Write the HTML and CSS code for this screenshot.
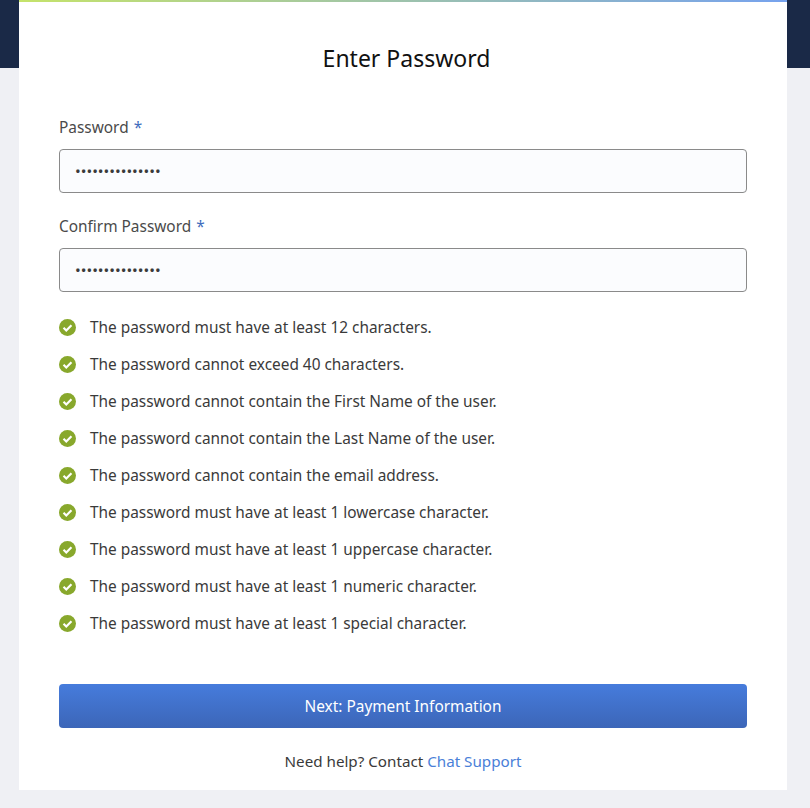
FILE: index.html
```html
<!DOCTYPE html>
<html lang="en">
<head>
	<meta charset="UTF-8">
	<title>Enter Password</title>
	<link rel="stylesheet" href="styles.css">
</head>
<body>
	<div class="card">
		<h1 class="title">Enter Password</h1>
		<form class="form">
			<label class="field">
				<span class="field-label">Password <em>*</em></span>
				<input class="input" type="password" value="abcdefghijklmno">
			</label>
			<label class="field">
				<span class="field-label">Confirm Password <em>*</em></span>
				<input class="input" type="password" value="abcdefghijklmno">
			</label>
			<ul class="rules">
				<li><svg class="check" viewBox="0 0 18 18"><circle cx="9" cy="9" r="9"/><path d="M4.8 9.3l2.9 2.8 5.5-5.6"/></svg>The password must have at least 12 characters.</li>
				<li><svg class="check" viewBox="0 0 18 18"><circle cx="9" cy="9" r="9"/><path d="M4.8 9.3l2.9 2.8 5.5-5.6"/></svg>The password cannot exceed 40 characters.</li>
				<li><svg class="check" viewBox="0 0 18 18"><circle cx="9" cy="9" r="9"/><path d="M4.8 9.3l2.9 2.8 5.5-5.6"/></svg>The password cannot contain the First Name of the user.</li>
				<li><svg class="check" viewBox="0 0 18 18"><circle cx="9" cy="9" r="9"/><path d="M4.8 9.3l2.9 2.8 5.5-5.6"/></svg>The password cannot contain the Last Name of the user.</li>
				<li><svg class="check" viewBox="0 0 18 18"><circle cx="9" cy="9" r="9"/><path d="M4.8 9.3l2.9 2.8 5.5-5.6"/></svg>The password cannot contain the email address.</li>
				<li><svg class="check" viewBox="0 0 18 18"><circle cx="9" cy="9" r="9"/><path d="M4.8 9.3l2.9 2.8 5.5-5.6"/></svg>The password must have at least 1 lowercase character.</li>
				<li><svg class="check" viewBox="0 0 18 18"><circle cx="9" cy="9" r="9"/><path d="M4.8 9.3l2.9 2.8 5.5-5.6"/></svg>The password must have at least 1 uppercase character.</li>
				<li><svg class="check" viewBox="0 0 18 18"><circle cx="9" cy="9" r="9"/><path d="M4.8 9.3l2.9 2.8 5.5-5.6"/></svg>The password must have at least 1 numeric character.</li>
				<li><svg class="check" viewBox="0 0 18 18"><circle cx="9" cy="9" r="9"/><path d="M4.8 9.3l2.9 2.8 5.5-5.6"/></svg>The password must have at least 1 special character.</li>
			</ul>
			<button class="next" type="button">Next: Payment Information</button>
		</form>
		<p class="help">Need help? Contact <a href="#">Chat Support</a></p>
	</div>
</body>
</html>
```

FILE: styles.css
```css
*{margin: 0;padding: 0;box-sizing: border-box;list-style: none}
html,body{height: 100%}
body{
	background: linear-gradient(#1a2947 68px,#eff0f4 68px);
	font: 15.4px/22px "Noto Sans",sans-serif;
	color: #3a3a3a;
	overflow: hidden;
}
.card{
	width: 768px;
	height: 790px;
	margin-left: 19px;
	padding: 0 40px;
	background: #fff;
	border-top: 2px solid;
	border-image: linear-gradient(90deg,#c5e36a,#76a2ee) 1;
}
.title{
	margin-top: 41px;
	padding-left: 7px;
	font-size: 23px;
	line-height: 30px;
	font-weight: 400;
	text-align: center;
	color: #111;
}
.field{
	display: block;
	padding-top: 13px;
	margin-bottom: 10px;
}
.field:first-child{
	padding-top: 44px;
}
.field-label{
	display: block;
	margin-bottom: 10px;
	color: #4a4a4a;
}
.field-label em{
	margin-left: 1px;
	font-style: normal;
	color: #3f6dbd;
}
.input{
	display: block;
	width: 100%;
	height: 44px;
	padding: 0 15px;
	border: 1px solid #8a8a8a;
	border-radius: 4px;
	background: #fbfcfe;
	font: 15.2px "Noto Sans",sans-serif;
	color: #3a3a3a;
}
.rules{
	margin-top: 17px;
}
.rules li{
	display: flex;
	align-items: center;
	gap: 14px;
	height: 37px;
}
.check{
	flex: none;
	width: 17px;
	height: 17px;
}
.check circle{
	fill: #88a82c;
}
.check path{
	fill: none;
	stroke: #fff;
	stroke-width: 2.3;
}
.next{
	display: block;
	width: 100%;
	height: 44px;
	margin-top: 42px;
	border: 0;
	border-radius: 4px;
	background: linear-gradient(#467cdc,#3c66b8);
	font: 15.4px "Noto Sans",sans-serif;
	color: #fff;
}
.help{
	margin-top: 22px;
	font-size: 15.2px;
	text-align: center;
}
.help a{
	color: #4a7fd8;
	text-decoration: none;
}
```
